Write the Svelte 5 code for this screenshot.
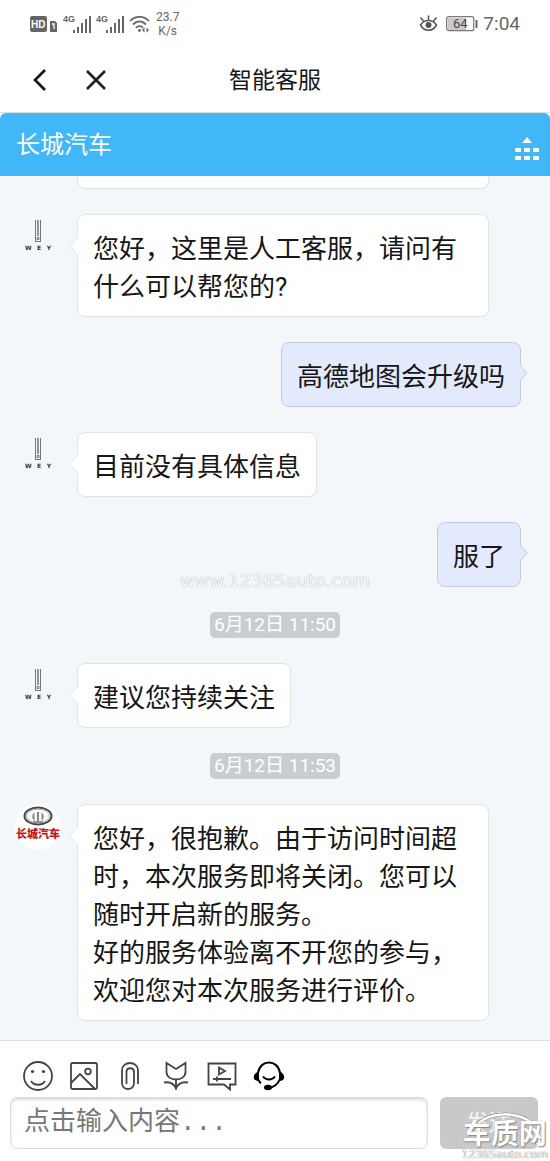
<script lang="ts">
  type Message = { kind: 'agent' | 'brand' | 'user' | 'time'; text: string };

  const messages: Message[] = [
    { kind: 'agent', text: '您好，这里是人工客服，请问有什么可以帮您的?' },
    { kind: 'user', text: '高德地图会升级吗' },
    { kind: 'agent', text: '目前没有具体信息' },
    { kind: 'user', text: '服了' },
    { kind: 'time', text: '6月12日 11:50' },
    { kind: 'agent', text: '建议您持续关注' },
    { kind: 'time', text: '6月12日 11:53' },
    {
      kind: 'brand',
      text: '您好，很抱歉。由于访问时间超时，本次服务即将关闭。您可以随时开启新的服务。\n好的服务体验离不开您的参与，欢迎您对本次服务进行评价。'
    }
  ];

  let draft = $state('');
</script>

{#snippet signal()}
  <svg width="28" height="20" viewBox="0 0 28 20" fill="#666">
    <text x="0" y="8" class="net">4G</text>
    <rect x="10" y="16" width="2" height="3" />
    <rect x="14" y="13" width="2" height="6" />
    <rect x="18" y="9" width="2" height="10" />
    <rect x="22" y="5" width="2" height="14" />
    <rect x="26" y="2" width="2" height="17" />
  </svg>
{/snippet}

<div class="page">
  <div class="status">
    <div class="status-left">
      <svg width="28" height="18" viewBox="0 0 28 18">
        <rect x="0" y="1" width="17" height="16" rx="2" fill="#666" />
        <text x="1" y="13" class="hd">HD</text>
        <path d="M20 6h5l2 2v9h-7z" fill="#666" />
        <path d="M22 9h2v5" fill="none" stroke="#fff" stroke-width="1.3" />
      </svg>
      {@render signal()}
      {@render signal()}
      <svg class="wifi" width="22" height="18" viewBox="0 0 22 18" fill="none" stroke="#666" stroke-width="1.8">
        <path d="M1 6C6 .5 15 .5 20 6M4 9.5c4-4 9-4 13 0M7 13c2-2.400 5-2.400 7 0" />
        <circle cx="10.500" cy="15.500" r="1.400" fill="#666" stroke="none" />
        <path d="M15.500 12.500v5L13 15zM17.500 12.500v5L20 15z" fill="#666" stroke="none" />
      </svg>
      <span class="speed">23.7<br />K/s</span>
    </div>
    <div class="status-right">
      <svg width="19" height="17" viewBox="0 0 19 17" fill="none" stroke="#555" stroke-width="1.600">
        <path d="M1.500 10c4-6 12-6 16 0c-4 7-12 7-16 0zM9.500 5V.5M4.500 6L1.500 2.500M14.500 6l3-3.500" />
        <circle cx="9.500" cy="10" r="3" fill="#555" stroke="none" />
      </svg>
      <svg width="32" height="16" viewBox="0 0 32 16">
        <rect x="2" y="2" width="18" height="12" fill="#c9c9c9" />
        <rect x=".7" y=".7" width="27" height="14" rx="2" fill="none" stroke="#777" stroke-width="1.200" />
        <rect x="29.500" y="4" width="2" height="8" fill="#666" />
        <text x="7" y="12" class="battery">64</text>
      </svg>
      <span class="clock">7:04</span>
    </div>
  </div>

  <nav class="navbar">
    <div class="nav-buttons">
      <button type="button" aria-label="返回">
        <svg width="24" height="24" viewBox="0 0 24 24" fill="none" stroke="#111" stroke-width="2.600">
          <path d="M17 2L7 12l10 10" />
        </svg>
      </button>
      <button type="button" aria-label="关闭">
        <svg width="24" height="24" viewBox="0 0 24 24" fill="none" stroke="#222" stroke-width="2.600">
          <path d="M3 3l18 18M21 3L3 21" />
        </svg>
      </button>
    </div>
    <h1>智能客服</h1>
  </nav>

  <header class="brand-bar">
    <h2>长城汽车</h2>
    <button type="button" aria-label="菜单">
      <svg width="24" height="24" viewBox="0 0 24 24" fill="#fff">
        <path d="M12 0l5 6H7z" />
        <path d="M0 11h6v4H0zM9 11h6v4H9zM18 11h6v4h-6zM0 19h6v4H0zM9 19h6v4H9zM18 19h6v4h-6z" />
      </svg>
    </button>
  </header>

  <main class="chat">
    <div class="bubble-end"></div>
    {#each messages as message}
      {#if message.kind === 'time'}
        <time>{message.text}</time>
      {:else if message.kind === 'user'}
        <div class="row row-user">
          <div class="bubble bubble-user">
            {message.text}
            <svg class="tail tail-user" width="8" height="18" viewBox="0 0 8 18">
              <path d="M0 1l7 8-7 8" fill="#e3eafd" stroke="#c5cbdc" />
            </svg>
          </div>
        </div>
      {:else}
        <div class="row">
          {#if message.kind === 'brand'}
            <div class="avatar avatar-brand">
              <svg width="30" height="20" viewBox="0 0 30 20" fill="none">
                <ellipse cx="15" cy="10" rx="13.500" ry="8.500" stroke="#444" stroke-width="2" />
                <ellipse cx="15" cy="10" rx="11.500" ry="6.800" stroke="#aaa" />
                <path d="M11.500 6c-3 3-3 6 0 9V6zM18.500 6c3 3 3 6 0 9V6zM14 6h2v9h-2z" fill="#888" />
                <path d="M10 16h10" stroke="#777" stroke-width="1.500" />
              </svg>
              <span>长城汽车</span>
            </div>
          {:else}
            <div class="avatar">
              <svg width="8" height="24" viewBox="0 0 8 24" fill="none">
                <path d="M1.500 1v21M6.500 1v21" stroke="#777" />
                <path d="M4 1v16" stroke="#888" stroke-width="1.800" />
                <path d="M1 22.500h6M3 18.500h2v2H3z" stroke="#777" />
              </svg>
              <div class="wey"><span>W</span><span>E</span><span>Y</span></div>
            </div>
          {/if}
          <div class="bubble">
            {message.text}
            <svg class="tail" width="9" height="20" viewBox="0 0 9 20">
              <path d="M9 1L1 10l8 9" fill="#fff" stroke="#e4e7ea" />
            </svg>
          </div>
        </div>
      {/if}
    {/each}
    <div class="watermark">www.12365auto.com</div>
  </main>

  <footer>
    <div class="tools">
      <button type="button" aria-label="表情">
        <svg width="30" height="30" viewBox="0 0 30 30">
          <circle cx="15" cy="15" r="14" />
          <path d="M8 20c3 5 11 5 14 0" />
          <circle class="solid" cx="9.500" cy="10.500" r="1.600" />
          <circle class="solid" cx="20.500" cy="10.500" r="1.600" />
        </svg>
      </button>
      <button type="button" aria-label="图片">
        <svg width="30" height="30" viewBox="0 0 30 30">
          <rect x="2" y="2" width="26" height="26" rx="1.500" />
          <circle cx="19" cy="10.500" r="2.800" />
          <path d="M2 22l9-9 15 15" />
        </svg>
      </button>
      <button type="button" aria-label="附件">
        <svg width="30" height="30" viewBox="0 0 30 30">
          <path d="M23 23V9.500c0-10-16-10-16 0V22c0 8 12 8 12 0V11c0-5-7.500-5-7.500 0v12" />
        </svg>
      </button>
      <button type="button" aria-label="送花">
        <svg width="30" height="30" viewBox="0 0 30 30">
          <path d="M5.500 2l9.500 6 9.500-6v9c0 10-19 10-19 0zM15 18.500V28" />
          <path d="M3 21.500c6-1 10 1 12 6c2-5 6-7 12-6" />
        </svg>
      </button>
      <button type="button" aria-label="评价">
        <svg width="30" height="30" viewBox="0 0 30 30">
          <path d="M1.500 2.500h27v21H23v5l-6-5H1.500z" />
          <path d="M12 6.500l6 3.500-6 3.500zM6 18h18M10 15.500v5" />
        </svg>
      </button>
      <button type="button" aria-label="人工客服">
        <svg class="headset" width="32" height="30" viewBox="0 0 32 30">
          <path d="M5 12C7-2 25-2 27 12M27 18c-2 5-6 8-11 9M5 18c1 2 1 3 3 4M10 15.500c3 4 9 4 12 0" />
          <path class="solid" d="M6 10v10C-1 20-1 13 6 10zM26 10v10c7 0 7-7 0-10z" />
          <ellipse class="solid" cx="15" cy="26.500" rx="4" ry="2.800" />
        </svg>
      </button>
    </div>
    <form class="composer" onsubmit={(e) => e.preventDefault()}>
      <input type="text" aria-label="消息内容" placeholder="点击输入内容..." bind:value={draft} />
      <button type="submit">发送</button>
    </form>
    <div class="site-mark">
      <svg width="60" height="14" viewBox="0 0 60 14" fill="none">
        <path d="M1 13C16-1 42-1 59 12" stroke="#999" stroke-width="4" />
        <path d="M1 13C16-1 42-1 59 12" stroke="#fff" stroke-width="2.500" />
      </svg>
      <strong>车质网</strong>
      <span>12365auto.com</span>
    </div>
  </footer>
</div>

<style>
  :global(body) {
    margin: 0;
    background: #fff;
  }

  .page {
    display: flex;
    flex-direction: column;
    min-height: 100vh;
    font-family: Roboto, 'Noto Sans CJK SC', sans-serif;
    color: #161616;
  }

  button {
    padding: 0;
    border: 0;
    background: none;
    cursor: pointer;
  }

  svg {
    display: block;
    flex: none;
  }

  .status {
    display: flex;
    align-items: center;
    justify-content: space-between;
    height: 47px;
    padding: 0 30px;
    color: #666;
  }

  .status-left,
  .status-right {
    display: flex;
    align-items: center;
    gap: 5px;
  }

  .status-right {
    gap: 8px;
  }

  .speed {
    font-size: 12px;
    line-height: 14px;
    text-align: center;
  }

  .clock {
    margin-left: -3px;
    font-size: 19px;
    line-height: 24px;
  }

  .net {
    font: bold 9px 'Liberation Sans', sans-serif;
  }

  .hd {
    font: bold 10px 'Liberation Sans', sans-serif;
    fill: #fff;
  }

  .battery {
    font: 13px Roboto, sans-serif;
    fill: #444;
  }

  .navbar {
    display: grid;
    grid-template-columns: 1fr auto 1fr;
    align-items: center;
    height: 65px;
    border-bottom: 1px solid #ddd;
  }

  .nav-buttons {
    display: flex;
    gap: 32px;
    padding-left: 28px;
  }

  h1,
  h2 {
    margin: 0;
    font-weight: 400;
  }

  h1 {
    padding-top: 2px;
    font-size: 23px;
    line-height: 32px;
  }

  .brand-bar {
    display: flex;
    align-items: center;
    justify-content: space-between;
    height: 63px;
    padding: 0 11px 0 16px;
    border-radius: 6px 6px 0 0;
    background: #42b7f7;
    color: #fff;
  }

  .brand-bar button {
    margin-top: 8px;
  }

  h2 {
    font-size: 24px;
    line-height: 32px;
  }

  .chat {
    position: relative;
    flex: 1;
    display: flex;
    flex-direction: column;
    gap: 25px;
    padding: 0 29px 18px 15px;
    background: #f3f7fa;
  }

  .bubble-end {
    height: 12px;
    margin: 0 32px 0 62px;
    border: 1px solid #e1e4e7;
    border-top: 0;
    border-radius: 0 0 8px 8px;
    background: #fff;
  }

  .row {
    display: flex;
    align-items: flex-start;
    gap: 16px;
    margin-right: 32px;
  }

  .row-user {
    justify-content: flex-end;
    margin-right: 0;
  }

  .avatar {
    display: flex;
    flex: none;
    flex-direction: column;
    align-items: center;
    box-sizing: border-box;
    width: 46px;
    height: 46px;
    padding-top: 5px;
  }

  .avatar-brand {
    padding-top: 2px;
    border-radius: 50%;
    background: #fff;
    color: #c8141e;
    font-size: 11px;
    font-weight: 900;
    line-height: 18px;
  }

  .wey {
    display: flex;
    justify-content: space-between;
    width: 26px;
    font: bold 6px/10px 'DejaVu Sans', sans-serif;
    color: #333;
  }

  .bubble {
    position: relative;
    padding: 15px 15px 10px;
    border: 1px solid #e1e4e7;
    border-radius: 8px;
    background: #fff;
    font-size: 26px;
    line-height: 38px;
    white-space: pre-line;
  }

  .bubble-user {
    border-color: #c5cbdc;
    background: #e3eafd;
  }

  .tail {
    position: absolute;
    top: 21px;
    left: -9px;
  }

  .tail-user {
    right: -8px;
    left: auto;
  }

  time {
    align-self: center;
    margin-left: 14px;
    padding: 0 4px;
    border-radius: 5px;
    background: #c8cdd1;
    color: #fff;
    font-size: 19px;
    line-height: 26px;
  }

  .watermark {
    position: absolute;
    top: 394px;
    left: 0;
    width: 100%;
    color: #f6f9fc;
    font: 18px/22px 'DejaVu Sans', sans-serif;
    text-align: center;
    text-shadow: 0 0 1px #aaa, 0 0 1px #ccc;
  }

  footer {
    position: relative;
    padding: 20px 12px 12px 10px;
    border-top: 1px solid #dde1e5;
  }

  .tools {
    display: flex;
    gap: 16px;
    padding-left: 13px;
  }

  .tools svg {
    fill: none;
    stroke: #444;
    stroke-width: 1.8;
  }

  .tools .headset {
    stroke: #000;
    stroke-width: 2;
  }

  .tools .solid {
    fill: #444;
    stroke: none;
  }

  .tools .headset .solid {
    fill: #000;
  }

  .composer {
    display: flex;
    gap: 12px;
    margin-top: 6px;
  }

  input {
    flex: 1;
    min-width: 0;
    box-sizing: border-box;
    height: 52px;
    padding: 0 13px;
    border: 1px solid #ddd;
    border-radius: 7px;
    box-shadow: inset 0 2px 3px #ddd;
    background: #fff;
    font: 26px 'Liberation Mono', 'Noto Sans CJK SC', monospace;
  }

  input::placeholder {
    color: #777;
    opacity: 1;
  }

  .composer button {
    width: 98px;
    padding-bottom: 4px;
    border-radius: 6px;
    background: #c9c9c9;
    color: #f5f5f5;
    font: 23px 'Noto Sans CJK SC', sans-serif;
  }

  .site-mark {
    position: absolute;
    right: 2px;
    bottom: 0;
    display: flex;
    flex-direction: column;
    align-items: center;
    color: #fff;
    text-shadow: 0 0 1px #777, 1px 1px 1px #888;
    pointer-events: none;
  }

  .site-mark svg {
    margin-bottom: -4px;
  }

  .site-mark strong {
    font-size: 28px;
    font-weight: 700;
    line-height: 26px;
  }

  .site-mark span {
    font: 11px/13px 'DejaVu Sans', sans-serif;
    text-shadow: 0 0 1px #666, 0 0 1px #999;
  }
</style>
